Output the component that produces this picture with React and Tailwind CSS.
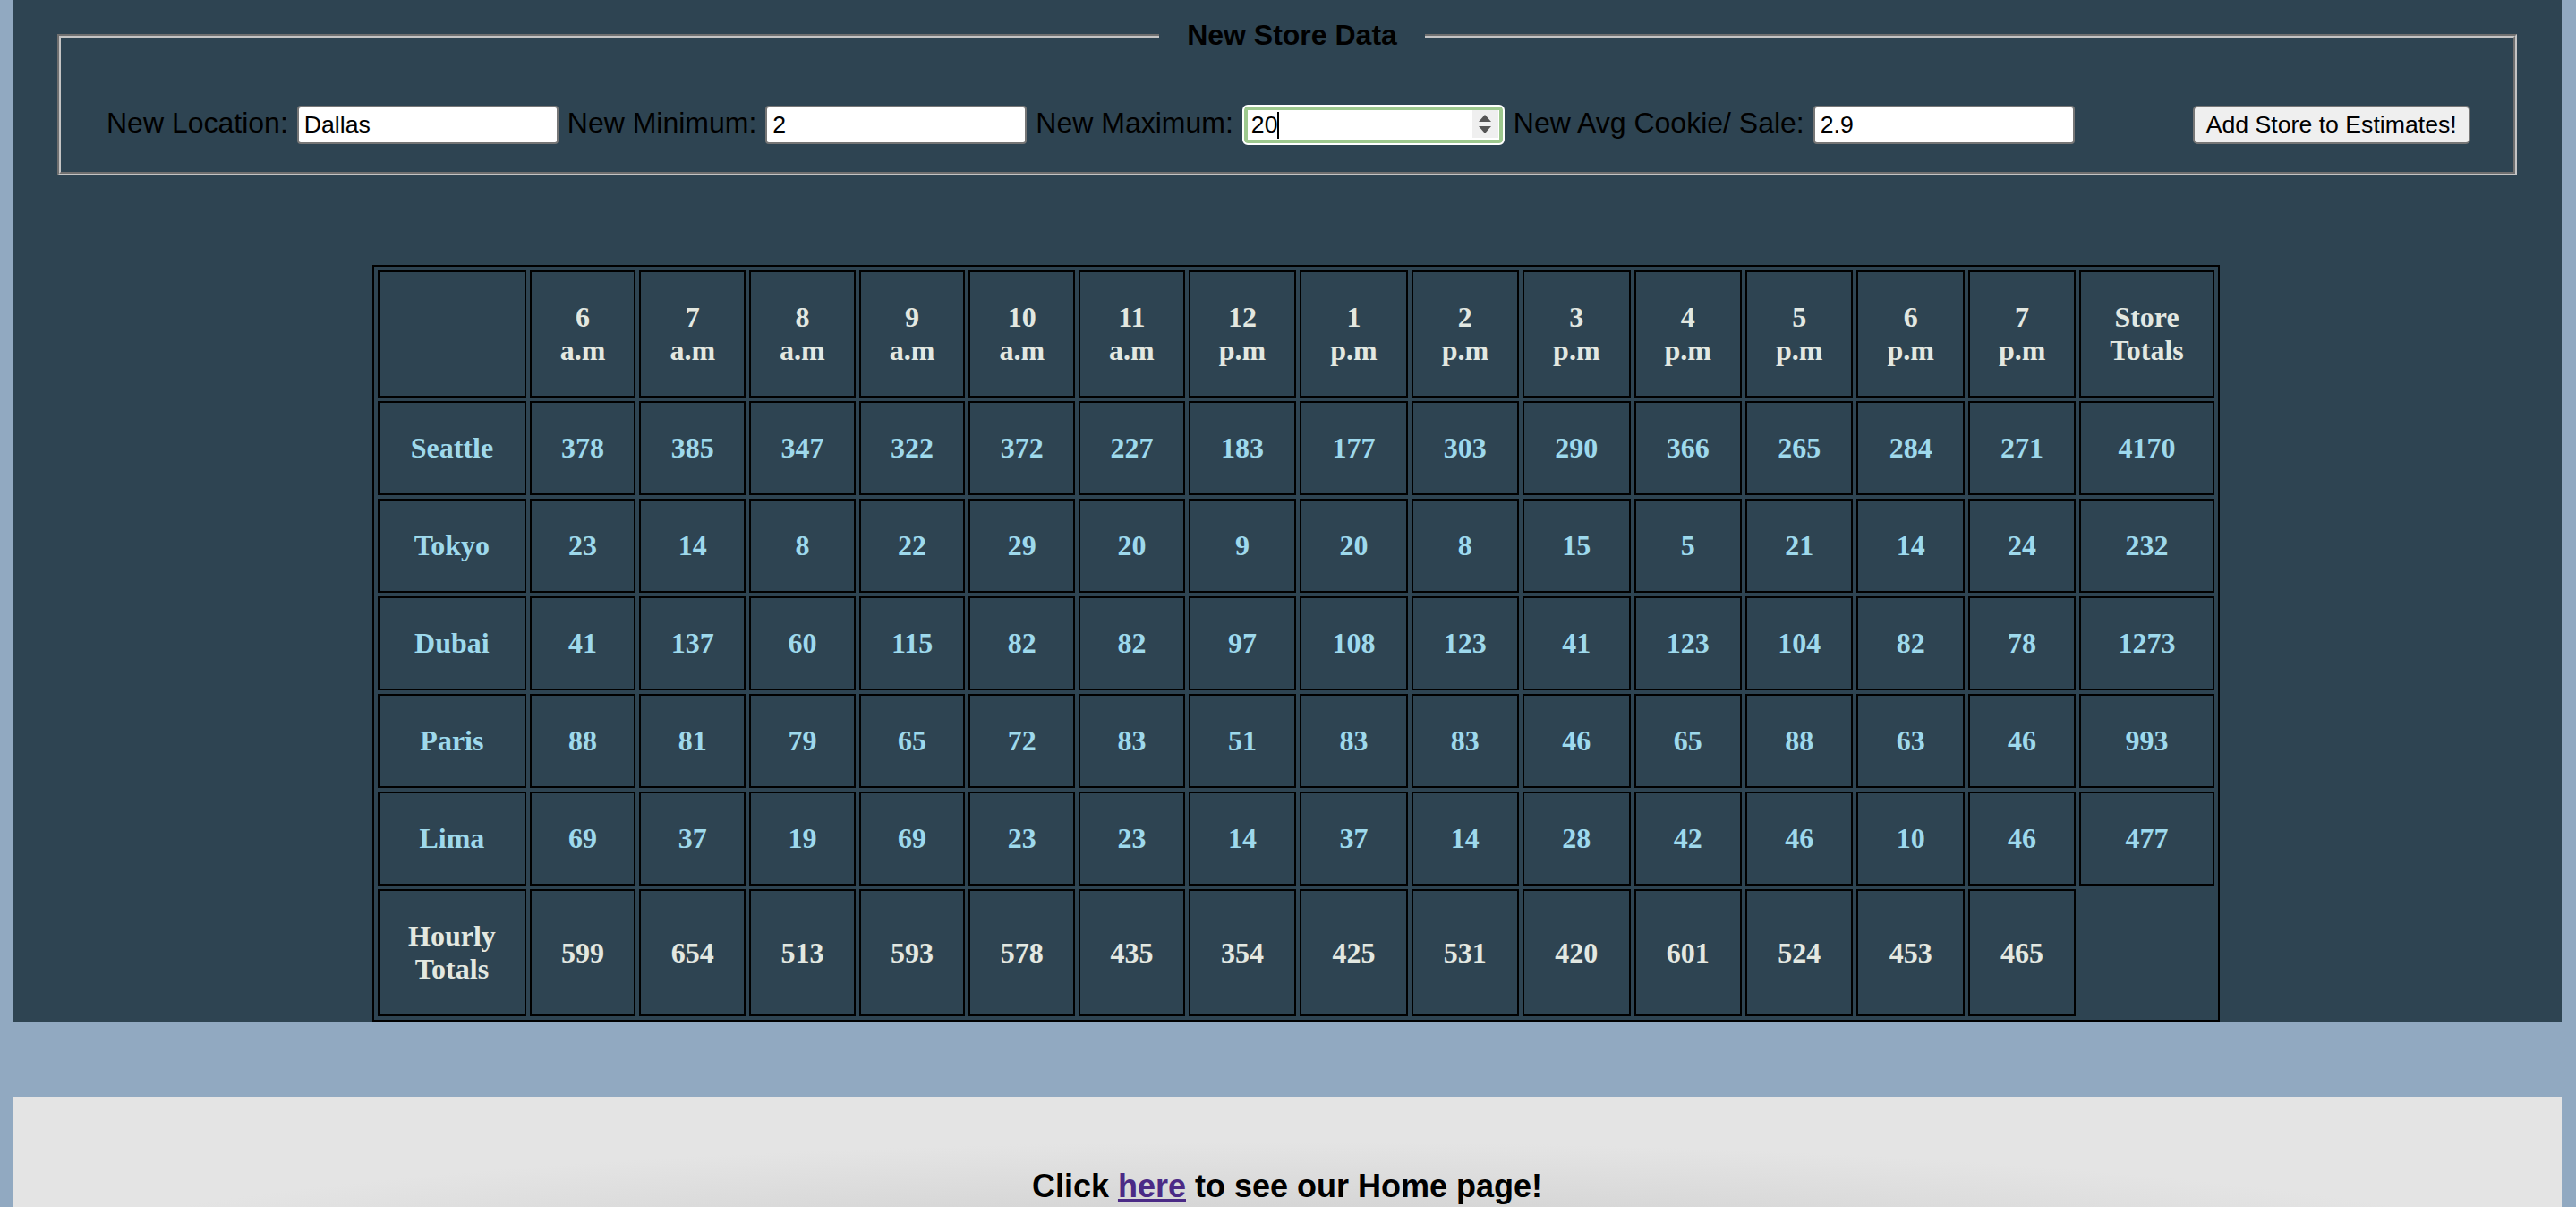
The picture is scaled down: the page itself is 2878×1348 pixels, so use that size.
const HOURS = [
  ["6", "a.m"], ["7", "a.m"], ["8", "a.m"], ["9", "a.m"], ["10", "a.m"], ["11", "a.m"],
  ["12", "p.m"], ["1", "p.m"], ["2", "p.m"], ["3", "p.m"], ["4", "p.m"], ["5", "p.m"],
  ["6", "p.m"], ["7", "p.m"],
];

const STORES = [
  { name: "Seattle", sales: [378, 385, 347, 322, 372, 227, 183, 177, 303, 290, 366, 265, 284, 271], total: 4170 },
  { name: "Tokyo",   sales: [23, 14, 8, 22, 29, 20, 9, 20, 8, 15, 5, 21, 14, 24],                     total: 232 },
  { name: "Dubai",   sales: [41, 137, 60, 115, 82, 82, 97, 108, 123, 41, 123, 104, 82, 78],          total: 1273 },
  { name: "Paris",   sales: [88, 81, 79, 65, 72, 83, 51, 83, 83, 46, 65, 88, 63, 46],                total: 993 },
  { name: "Lima",    sales: [69, 37, 19, 69, 23, 23, 14, 37, 14, 28, 42, 46, 10, 46],                total: 477 },
];

const HOURLY = [599, 654, 513, 593, 578, 435, 354, 425, 531, 420, 601, 524, 453, 465];

const cell = "border-2 border-black bg-[#2e4452] px-[32px] py-[32px] leading-[37px] text-center font-bold";

function Field({ label, value }) {
  return (
    <>
      <label className="whitespace-nowrap">{label}</label>
      <input
        readOnly
        defaultValue={value}
        className="w-[292px] h-[43px] border-2 border-[#767676] rounded-[4px] bg-white px-[6px] text-[26.67px] text-black outline-none"
      />
    </>
  );
}

export default function App() {
  return (
    <div className="min-h-screen bg-[#91a9c1] pl-[14px] pr-[16px] font-['Liberation_Sans',Arial,sans-serif] text-black">
      <main className="bg-[#2e4452] pt-[21px]">

        {/* ── New store form ─────────────────────────────── */}
        <fieldset className="mx-[50px] border-[4px] border-[#c4c4c4] [border-style:groove] pl-[51px] pr-[40px] pt-[60px] pb-[29px]">
          <legend align="center" className="mx-auto px-[31px] text-[32px] leading-[37px] font-bold">
            New Store Data
          </legend>
          <div className="flex items-baseline gap-[10px] text-[32px] leading-[37px]">
            <Field label="New Location:" value="Dallas" />
            <Field label="New Minimum:" value="2" />
            <label className="whitespace-nowrap">New Maximum:</label>
            <div className="relative w-[293px] h-[45px] rounded-[6px] border-2 border-white bg-white shadow-[inset_0_0_0_4px_#9dc88e] flex items-center pl-[8px] text-[26.67px] leading-[31px] self-center translate-y-[-1px]">
              <span>20</span>
              <span className="w-[2px] h-[30px] bg-black" />
              <div className="absolute right-[5px] top-[4px] w-[29px] h-[31px] bg-[#efefef] flex flex-col items-center justify-center gap-[5px]">
                <svg width="14" height="8" viewBox="0 0 14 8"><path d="M7 0 L14 8 L0 8 Z" fill="#555" /></svg>
                <svg width="14" height="8" viewBox="0 0 14 8"><path d="M0 0 L14 0 L7 8 Z" fill="#555" /></svg>
              </div>
            </div>
            <Field label="New Avg Cookie/ Sale:" value="2.9" />
            <button className="ml-[122px] h-[43px] px-[13px] border-2 border-[#767676] rounded-[5px] bg-[#efefef] text-[26.67px] text-black whitespace-nowrap">
              Add Store to Estimates!
            </button>
          </div>
        </fieldset>

        {/* ── Sales table ────────────────────────────────── */}
        <table className="ml-[402px] mt-[100px] border-2 border-black border-separate border-spacing-[4px] font-['Liberation_Serif','Times_New_Roman',serif] text-[32px]">
          <thead>
            <tr className="text-[#e3e8e1]">
              <th className={cell}></th>
              {HOURS.map(([h, s], i) => (
                <th key={i} className={cell}>{h}<br />{s}</th>
              ))}
              <th className={cell}>Store<br />Totals</th>
            </tr>
          </thead>
          <tbody>
            {STORES.map((st) => (
              <tr key={st.name} className="text-[#9ed9ec]">
                <th className={cell}>{st.name}</th>
                {st.sales.map((n, i) => (
                  <td key={i} className={cell}>{n}</td>
                ))}
                <td className={cell}>{st.total}</td>
              </tr>
            ))}
            <tr className="text-[#e3e8e1]">
              <th className={cell}>Hourly<br />Totals</th>
              {HOURLY.map((n, i) => (
                <td key={i} className={cell}>{n}</td>
              ))}
            </tr>
          </tbody>
        </table>
      </main>

      {/* ── Footer ─────────────────────────────────────── */}
      <footer className="mt-[84px] min-h-[400px] pt-[73px] text-center text-[36px] font-bold bg-[radial-gradient(ellipse_1450px_150px_at_50%_200px,#b8b8b8_0%,#d4d4d4_45%,#e4e4e4_100%)]">
        Click <a href="#" className="text-[#4b2a86] underline">here</a> to see our Home page!
      </footer>
    </div>
  );
}
